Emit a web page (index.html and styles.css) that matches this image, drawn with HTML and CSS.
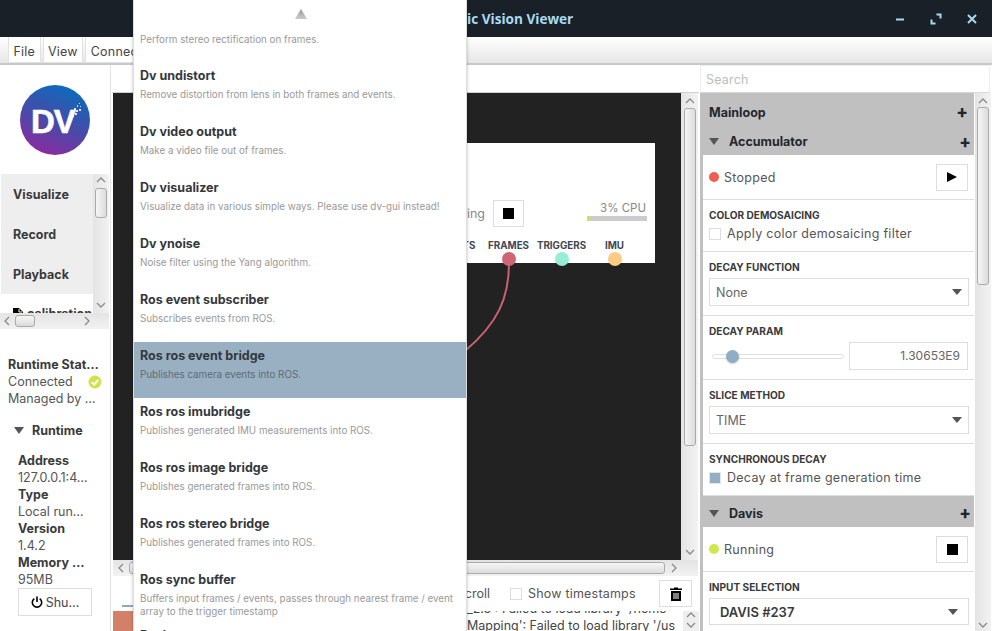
FILE: index.html
```html
<!DOCTYPE html>
<html lang="en">
<head>
<meta charset="utf-8">
<title>Dynamic Vision Viewer</title>
<link rel="stylesheet" href="styles.css">
</head>
<body>
<div class="app">
  <header class="titlebar">
    <span></span>
    <div class="title">Dynamic Vision Viewer</div>
    <div class="winctl">
      <svg width="10" height="10" viewBox="0 0 10 10"><path d="M1 5.500H9" class="wi"/></svg>
      <svg width="12" height="12" viewBox="0 0 12 12"><path d="M6.500 1.500H10.500V5.500M1.500 6.500V10.500H5.500" class="wi"/></svg>
      <svg width="10" height="10" viewBox="0 0 10 10"><path d="M1 1L9 9M9 1L1 9" class="wi"/></svg>
    </div>
  </header>
  <nav class="menubar">
    <div class="menu-item">File</div>
    <div class="menu-item">View</div>
    <div class="menu-item">Connect</div>
  </nav>
  <main class="body">
    <aside class="side">
      <div class="logo">
        <svg width="70" height="70" viewBox="0 0 70 70">
          <defs><linearGradient id="lg" x1="0.7" y1="0" x2="0.3" y2="1"><stop offset="0" stop-color="#0a6cbd"/><stop offset="0.55" stop-color="#4a49a8"/><stop offset="1" stop-color="#8d2a9f"/></linearGradient></defs>
          <circle cx="35" cy="35" r="35" fill="url(#lg)"/>
          <text x="11" y="48" class="logo-text">DV</text>
          <path d="M51 29h3v3h-3zM55 28h2v2h-2zM52 26h2v2h-2zM56 25h2v2h-2zM54 23h2v2h-2zM59 24h2v2h-2zM57 20h1v2h-1zM60 21h1v1h-1zM59 18h1v1h-1z" fill="#fff" opacity=".85"/>
        </svg>
      </div>
      <div class="tabs">
        <div class="tabs-list">
          <div class="tab">Visualize</div>
          <div class="tab">Record</div>
          <div class="tab">Playback</div>
          <div class="tab-file"><svg width="10" height="12" viewBox="0 0 10 12"><path d="M0 0H6L10 4V12H0Z" fill="#000"/><path d="M6 1V4H9" fill="none" stroke="#fff"/></svg><span>calibration</span></div>
        </div>
        <div class="sb-v sb-tabs">
          <svg class="chev" width="12" height="8" viewBox="0 0 12 8"><path d="M2 6L6 2L10 6"/></svg>
          <div class="thumb-v thumb-tabs"></div>
          <svg class="chev end" width="12" height="8" viewBox="0 0 12 8"><path d="M2 2L6 6L10 2"/></svg>
        </div>
      </div>
      <div class="sb-h sb-side">
        <svg class="chev" width="8" height="12" viewBox="0 0 8 12"><path d="M6 2L2 6L6 10"/></svg>
        <div class="thumb-h thumb-side"></div>
        <svg class="chev end" width="8" height="12" viewBox="0 0 8 12"><path d="M2 2L6 6L2 10"/></svg>
      </div>
      <div class="status">
        <div class="b">Runtime Stat…</div>
        <div class="status-conn">Connected
          <svg width="14" height="14" viewBox="0 0 14 14"><circle cx="7" cy="7" r="6.500" fill="#cfe24a"/><path d="M3.800 7.200L6.200 9.500L10.300 4.800" fill="none" stroke="#fff" stroke-width="2"/></svg>
        </div>
        <div>Managed by …</div>
      </div>
      <div class="rt-head"><span class="tri"></span><span class="b">Runtime</span></div>
      <div class="rt-body">
        <div class="b">Address</div><div>127.0.0.1:4…</div>
        <div class="b">Type</div><div>Local run…</div>
        <div class="b">Version</div><div>1.4.2</div>
        <div class="b">Memory …</div><div>95MB</div>
      </div>
      <div class="shut">
        <svg width="12" height="12" viewBox="0 0 12 12"><path d="M3.300 2.600A4.700 4.700 0 1 0 8.700 2.600M6 .5V6" fill="none" stroke="#000" stroke-width="1.600"/></svg>
        <span>Shu…</span>
      </div>
    </aside>

    <section class="center">
      <div class="toolbar"></div>
      <div class="canvas-row">
        <div class="canvas">
          <svg class="wire" width="567" height="467" viewBox="0 0 567 467"><path d="M396 170C396 205 385 230 352 258" fill="none" stroke="#c9626f" stroke-width="2"/></svg>
          <div class="node">
            <div class="node-status">
              <span class="node-run">Running</span>
              <div class="btn node-btn"><i class="stop"></i></div>
              <div class="cpu">
                <div class="cpu-text">3% CPU</div>
                <div class="cpu-bar"><i></i></div>
              </div>
            </div>
            <div class="ports">
              <div class="port"><span>EVENTS</span><i class="dot d0"></i></div>
              <div class="port"><span>FRAMES</span><i class="dot d1"></i></div>
              <div class="port"><span>TRIGGERS</span><i class="dot d2"></i></div>
              <div class="port"><span>IMU</span><i class="dot d3"></i></div>
            </div>
          </div>
        </div>
        <div class="sb-v sb-canvas">
          <svg class="chev" width="12" height="8" viewBox="0 0 12 8"><path d="M2 6L6 2L10 6"/></svg>
          <div class="thumb-v thumb-canvas"></div>
          <svg class="chev end" width="12" height="8" viewBox="0 0 12 8"><path d="M2 2L6 6L10 2"/></svg>
        </div>
      </div>
      <div class="sb-h sb-center">
        <svg class="chev" width="8" height="12" viewBox="0 0 8 12"><path d="M6 2L2 6L6 10"/></svg>
        <div class="thumb-h thumb-center"></div>
        <svg class="chev" width="8" height="12" viewBox="0 0 8 12"><path d="M2 2L6 6L2 10"/></svg>
      </div>
      <div class="logbar">
        <i class="plot-line"></i>
        <span class="autoscroll">Auto-scroll</span>
        <i class="check"></i>
        <span class="ts">Show timestamps</span>
        <div class="btn trash">
          <svg width="12" height="14" viewBox="0 0 12 14"><path d="M4 1.500V.5H8V1.500H12V3H0V1.500ZM1 4H11V14H1Z" fill="#000"/><path d="M4 6V12M6 6V12M8 6V12" stroke="#fff"/></svg>
        </div>
      </div>
      <div class="logrow">
        <i class="plot"></i>
        <div class="logtext">
          <div>_2.3 : Failed to load library '/home</div>
          <div>Mapping': Failed to load library '/us</div>
        </div>
        <div class="logscroll">
          <svg class="chev" width="12" height="8" viewBox="0 0 12 8"><path d="M2 6L6 2L10 6"/></svg>
          <svg class="chev" width="12" height="8" viewBox="0 0 12 8"><path d="M2 2L6 6L10 2"/></svg>
        </div>
      </div>
    </section>

    <aside class="props">
      <div class="search">Search</div>
      <div class="props-row">
        <div class="panel">
          <div class="head-main"><span>Mainloop</span><b class="plus">+</b></div>
          <div class="head-mod"><span class="tri"></span><span class="hname">Accumulator</span><b class="plus">+</b></div>
          <div class="row row-state">
            <i class="led red"></i><span>Stopped</span>
            <div class="btn state-btn"><svg width="12" height="12" viewBox="0 0 12 12"><path d="M1 1L11 6L1 11Z" fill="#000"/></svg></div>
          </div>
          <div class="row row-check">
            <div class="lbl">COLOR DEMOSAICING</div>
            <div class="chk-line"><i class="check"></i><span>Apply color demosaicing filter</span></div>
          </div>
          <div class="row row-field">
            <div class="lbl">DECAY FUNCTION</div>
            <div class="select"><span>None</span><i class="caret"></i></div>
          </div>
          <div class="row row-field">
            <div class="lbl">DECAY PARAM</div>
            <div class="slider-line">
              <div class="slider"><i class="knob"></i></div>
              <div class="num">1.30653E9</div>
            </div>
          </div>
          <div class="row row-field">
            <div class="lbl">SLICE METHOD</div>
            <div class="select"><span>TIME</span><i class="caret"></i></div>
          </div>
          <div class="row row-check">
            <div class="lbl">SYNCHRONOUS DECAY</div>
            <div class="chk-line"><i class="check on"></i><span>Decay at frame generation time</span></div>
          </div>
          <div class="head-mod head-davis"><span class="tri"></span><span class="hname">Davis</span><b class="plus">+</b></div>
          <div class="row row-state">
            <i class="led green"></i><span>Running</span>
            <div class="btn state-btn"><i class="stop"></i></div>
          </div>
          <div class="row row-field last">
            <div class="lbl">INPUT SELECTION</div>
            <div class="select strong"><span>DAVIS #237</span><i class="caret"></i></div>
          </div>
        </div>
        <div class="sb-v sb-props">
          <svg class="chev" width="12" height="8" viewBox="0 0 12 8"><path d="M2 6L6 2L10 6"/></svg>
          <div class="thumb-v thumb-props"></div>
          <svg class="chev end" width="12" height="8" viewBox="0 0 12 8"><path d="M2 2L6 6L10 2"/></svg>
        </div>
      </div>
    </aside>
  </main>
</div>

<div class="popup">
  <div class="popup-arrow"><svg width="12" height="10" viewBox="0 0 12 10"><defs><linearGradient id="ag" x1="0" y1="0" x2="0" y2="1"><stop offset="0" stop-color="#999"/><stop offset="1" stop-color="#ccc"/></linearGradient></defs><path d="M6 0L12 10H0Z" fill="url(#ag)"/></svg></div>
  <div class="item first"><p>Perform stereo rectification on frames.</p></div>
  <div class="item"><h4>Dv undistort</h4><p>Remove distortion from lens in both frames and events.</p></div>
  <div class="item"><h4>Dv video output</h4><p>Make a video file out of frames.</p></div>
  <div class="item"><h4>Dv visualizer</h4><p>Visualize data in various simple ways. Please use dv-gui instead!</p></div>
  <div class="item"><h4>Dv ynoise</h4><p>Noise filter using the Yang algorithm.</p></div>
  <div class="item"><h4>Ros event subscriber</h4><p>Subscribes events from ROS.</p></div>
  <div class="item sel"><h4>Ros ros event bridge</h4><p>Publishes camera events into ROS.</p></div>
  <div class="item"><h4>Ros ros imubridge</h4><p>Publishes generated IMU measurements into ROS.</p></div>
  <div class="item"><h4>Ros ros image bridge</h4><p>Publishes generated frames into ROS.</p></div>
  <div class="item"><h4>Ros ros stereo bridge</h4><p>Publishes generated frames into ROS.</p></div>
  <div class="item"><h4>Ros sync buffer</h4><p>Buffers input frames / events, passes through nearest frame / event array to the trigger timestamp</p></div>
  <div class="item"><h4>Rosbag</h4></div>
</div>
</body>
</html>
```

FILE: styles.css
```css
* { box-sizing: border-box; }
html, body { margin: 0; height: 631px; overflow: hidden; }
body { font-family: Inter, "Liberation Sans", sans-serif; font-size: 12.500px; color: #555; background: #fff; position: relative; }
.app { display: flex; flex-direction: column; width: 992px; height: 631px; }
i { display: block; }
.b { font-weight: 700; color: #3a3a3a; }

.titlebar { height: 37px; flex: none; background: #1a2027; display: grid; grid-template-columns: 1fr auto 1fr; align-items: center; }
.title { font-family: "Open Sans", sans-serif; font-weight: 700; font-size: 13.600px; color: #a9daf3; }
.winctl { justify-self: end; display: flex; align-items: center; gap: 25px; padding-right: 15px; }
.wi { fill: none; stroke: #a9daf3; stroke-width: 2; }

.menubar { height: 28px; flex: none; background: linear-gradient(#fff, #e6e6e6); border-bottom: 2px solid #c8c8c8; display: flex; gap: 2px; padding-left: 8px; }
.menu-item { background: #fff; border: 1px solid #e2e2e2; border-top: 0; padding: 0 4.500px; height: 26px; line-height: 29px; color: #444; font-size: 12.500px; letter-spacing: .2px; }

.body { flex: 1; display: flex; min-height: 0; }

.side { width: 110px; flex: none; display: flex; flex-direction: column; margin-right: 2px; overflow: hidden; box-shadow: 1px 0 0 #e4e4e4; }
.logo { height: 109px; padding: 20px 0 0 20px; flex: none; }
.logo svg { display: block; }
.logo-text { font-family: "Liberation Sans", sans-serif; font-weight: 700; font-size: 33px; fill: #fff; stroke: #fff; stroke-width: .6px; letter-spacing: -1px; }
.tabs { display: flex; height: 139px; flex: none; padding-left: 1px; }
.tabs-list { width: 92px; overflow: hidden; }
.tab { height: 40px; line-height: 41px; background: #eee; padding-left: 12px; font-weight: 700; color: #3a3a3a; font-size: 12.500px; }
.tab-file { display: flex; align-items: center; gap: 4px; padding: 12px 0 0 12px; font-weight: 700; color: #3a3a3a; white-space: nowrap; }

.sb-v { display: flex; flex-direction: column; align-items: center; background: linear-gradient(90deg, #e4e4e4, #f2f2f2); flex: none; }
.sb-h { display: flex; align-items: center; background: linear-gradient(#e4e4e4, #f2f2f2); flex: none; }
.chev { fill: none; stroke: #8a8a8a; stroke-width: 1.300; display: block; flex: none; }
.end { margin-top: auto; }
.sb-h .end { margin-top: 0; margin-left: auto; }
.thumb-v { width: 12px; background: linear-gradient(90deg, #f6f6f6, #dcdcdc); border: 1px solid #aaa; border-radius: 3px; flex: none; }
.thumb-h { height: 12px; background: linear-gradient(#f6f6f6, #dcdcdc); border: 1px solid #aaa; border-radius: 3px; flex: none; }
.sb-tabs { width: 16px; padding: 2px 0 4px; }
.thumb-tabs { height: 30px; margin-top: 4px; }
.sb-side { height: 16px; width: 109px; padding: 0 18px 0 3px; }
.thumb-side { width: 20px; margin-left: 4px; }

.status { margin-top: 27px; padding-left: 8px; line-height: 17px; white-space: nowrap; flex: none; }
.status-conn { display: flex; align-items: center; justify-content: space-between; width: 94px; }
.rt-head { margin-top: 15px; padding-left: 14px; display: flex; align-items: center; gap: 8px; line-height: 17px; }
.tri { width: 0; height: 0; border-left: 5px solid transparent; border-right: 5px solid transparent; border-top: 7px solid #555; flex: none; }
.rt-body { margin-top: 13px; padding-left: 18px; line-height: 17px; white-space: nowrap; }
.shut { margin: 0 0 0 18px; width: 74px; height: 28px; flex: none; border: 1px solid #ddd; display: flex; align-items: center; justify-content: center; gap: 3px; color: #444; }

.center { flex: 1; width: 588px; min-width: 0; display: flex; flex-direction: column; }
.toolbar { height: 28px; flex: none; border-bottom: 1px solid #d0d0d0; }
.canvas-row { height: 467px; flex: none; display: flex; padding-left: 1px; }
.canvas { width: 568px; background: #222; position: relative; }
.wire { position: absolute; left: 0; top: 0; }
.sb-canvas { width: 17px; padding: 4px 0 4px; }
.thumb-canvas { height: 338px; margin-top: 3px; }
.sb-center { height: 16px; margin-left: 1px; width: 585px; padding: 0 6px 0 4px; }
.thumb-center { width: 536px; margin-left: 4px; margin-right: 5px; }

.node { position: absolute; left: 187px; top: 50px; width: 355px; height: 120px; background: #fff; }
.node-status { display: flex; justify-content: flex-end; align-items: center; height: 27px; margin-top: 57px; padding-right: 8px; }
.node-run { margin-right: 8px; color: #888; }
.node-btn { width: 31px; height: 27px; margin-right: 63px; }
.stop { width: 11px; height: 11px; background: #000; }
.btn { display: flex; align-items: center; justify-content: center; border: 1px solid #ddd; background: #fff; flex: none; }
.cpu { width: 60px; position: relative; align-self: flex-start; font-size: 11.500px; color: #888; text-align: right; }
.cpu-text { line-height: 14px; margin-top: 1px; padding-right: 1px; white-space: nowrap; }
.cpu-bar { height: 5px; background: #ccc; margin-top: 1px; }
.cpu-bar i { width: 2px; height: 5px; background: #cfe24a; }
.ports { display: flex; justify-content: flex-end; padding-right: 14px; margin-top: 13px; }
.port { width: 53px; display: flex; flex-direction: column; align-items: center; font-size: 9.800px; font-weight: 700; color: #3f4750; line-height: 12px; white-space: nowrap; }
.dot { width: 14px; height: 14px; border-radius: 50%; }
.d0 { background: #999; }
.d1 { background: #cf6474; }
.d2 { background: #96efd5; }
.d3 { background: #fdcb82; }

.logbar { height: 35px; flex: none; display: flex; align-items: center; font-size: 12.500px; color: #555; white-space: nowrap; }
.logbar span { flex: none; }
.plot-line { width: 11px; height: 2px; background: #8fa9bc; align-self: flex-end; margin: 0 0 4px 10px; flex: none; }
.autoscroll { margin-left: 292px; }
.logbar .check { margin: 0 6px 0 20px; }
.ts { letter-spacing: .2px; }
.trash { width: 33px; height: 27px; margin-left: auto; margin-right: 7px; }
.logrow { height: 20px; flex: none; display: flex; overflow: hidden; }
.plot { width: 20px; margin-left: 1px; background: #d47f6a; flex: none; }
.logtext { width: 550px; padding-left: 334px; font-size: 12.500px; line-height: 17px; margin-top: -11px; white-space: nowrap; overflow: hidden; color: #444; }
.logscroll { width: 16px; display: flex; flex-direction: column; align-items: center; gap: 2px; background: #eee; flex: none; }

.props { width: 292px; flex: none; display: flex; flex-direction: column; margin-left: 1px; }
.search { height: 28px; flex: none; border: 1px solid #eee; border-bottom: 1px solid #d8d8d8; width: 290px; line-height: 27px; padding-left: 5px; color: #bdbdbd; font-size: 12.500px; letter-spacing: .2px; }
.props-row { flex: 1; display: flex; min-height: 0; overflow: hidden; }
.panel { width: 274px; background: #c0c0c0; padding-left: 3px; flex: none; overflow: hidden; height: 538px; }
.head-main { height: 32px; display: flex; align-items: center; padding: 6px 6px 0 6px; justify-content: space-between; font-weight: 700; color: #22272e; font-size: 12.500px; }
.head-mod { height: 30px; display: flex; align-items: center; padding: 3px 0 0 6px; font-weight: 700; color: #22272e; font-size: 12.500px; position: relative; }
.hname { margin-left: 10px; }
.head-mod .plus { margin-left: auto; margin-right: 3px; }
.head-davis { height: 31px; padding-top: 3px; }
.plus { font-size: 17px; line-height: 14px; color: #22272e; font-weight: 800; }
.row { background: #fff; border-bottom: 1px solid #ddd; padding: 0 6px; color: #555; font-size: 12.500px; letter-spacing: .28px; }
.row-state { height: 45px; display: flex; align-items: center; }
.led { width: 10px; height: 10px; border-radius: 50%; margin-right: 5px; }
.red { background: #ef5e4e; }
.green { background: #cfe84a; }
.state-btn { width: 32px; height: 27px; margin-left: auto; }
.lbl { font-size: 10.100px; font-weight: 700; color: #3a3a3a; line-height: 12px; letter-spacing: 0; white-space: nowrap; }
.row-check { height: 52px; padding-top: 9px; }
.chk-line { display: flex; align-items: center; gap: 6px; margin-top: 6px; line-height: 14px; white-space: nowrap; }
.check { width: 12px; height: 12px; border: 1px solid #ddd; background: #fff; flex: none; }
.check.on { background: #93adc3; border-color: #dfe6ec; }
.row-field { height: 64px; padding-top: 9px; }
.select { margin-top: 5px; height: 28px; width: 260px; border: 1px solid #ddd; display: flex; align-items: center; padding: 0 6px; justify-content: space-between; color: #666; letter-spacing: 0; }
.caret { width: 0; height: 0; border-left: 5px solid transparent; border-right: 5px solid transparent; border-top: 6px solid #555; }
.strong { font-weight: 600; color: #3a3a3a; padding: 0 10px; font-size: 13px; height: 27px; }
.slider-line { display: flex; align-items: center; margin-top: 5px; padding-left: 3px; }
.slider { width: 133px; height: 5px; border: 1px solid #e0e0e0; border-radius: 3px; position: relative; }
.knob { position: absolute; left: 13px; top: -5px; width: 13px; height: 13px; border-radius: 50%; background: #8fadc4; box-shadow: 0 1px 2px rgba(0,0,0,.2); }
.num { margin-left: 5px; width: 120px; height: 28px; border: 1px solid #ddd; text-align: right; line-height: 26px; padding-right: 7px; color: #666; font-size: 12px; letter-spacing: 0; }
.last { height: 60px; border-bottom: 0; }
.sb-props { width: 16px; margin-left: 1px; padding: 4px 0 2px; }
.thumb-props { height: 178px; margin-top: 2px; }

.popup { position: absolute; left: 133px; top: 0; width: 334px; height: 631px; background: #fff; border-left: 1px solid #ddd; border-right: 1px solid #ddd; box-shadow: 0 0 3px rgba(0,0,0,.25); overflow: hidden; }
.popup-arrow { height: 31px; display: flex; justify-content: center; padding: 9px 0 0 2px; }
.popup-arrow svg { display: block; }
.item { height: 56px; padding: 6px 6px 0; }
.item h4 { margin: 0; font-size: 12.500px; line-height: 16px; font-weight: 700; color: #33383d; }
.item p { margin: 4px 0 0; font-size: 9.800px; line-height: 13px; color: #999; }
.item.first { height: 31px; padding-top: 2px; }
.item.first p { margin: 0; }
.sel { background: #99b0c2; }
.sel p { color: #5f6b75; }
```
